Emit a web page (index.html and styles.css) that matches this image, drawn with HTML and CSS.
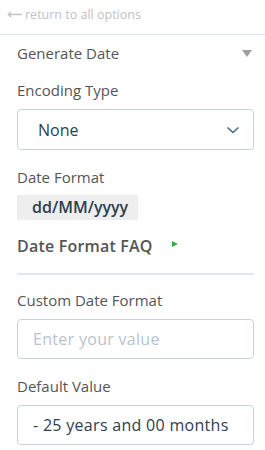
FILE: index.html
```html
<!DOCTYPE html>
<html lang="en">
<head>
    <meta charset="UTF-8">
    <meta name="viewport" content="width=device-width, initial-scale=1.0">
    <title>Generate Date</title>
    <link rel="stylesheet" href="styles.css">
</head>
<body>
    <div class="back-link">
        <svg width="15" height="7" viewBox="0 0 15 7">
            <path d="M15 3.5 H1.5 M4 1 L1.2 3.5 L4 6" fill="none" stroke="#c2c2c2" stroke-width="1.3"/>
        </svg>
        <span>return to all options</span>
    </div>

    <div class="panel">
        <div class="panel-title">
            <span>Generate Date</span>
            <span class="caret"></span>
        </div>

        <div class="field">
            <label class="field-label">Encoding Type</label>
            <div class="select-box">
                <span>None</span>
                <svg width="14" height="8" viewBox="0 0 14 8">
                    <path d="M1.5 1.5 L7 6.5 L12.5 1.5" fill="none" stroke="#4a6785" stroke-width="1.6"/>
                </svg>
            </div>
        </div>

        <div class="field">
            <label class="field-label">Date Format</label>
            <div class="format-tag">dd/MM/yyyy</div>
        </div>

        <div class="faq-row">
            <span>Date Format FAQ</span>
            <span class="play"></span>
        </div>

        <hr class="divider">

        <div class="field">
            <label class="field-label" for="customFormat">Custom Date Format</label>
            <input type="text" id="customFormat" class="text-input" placeholder="Enter your value">
        </div>

        <div class="field">
            <label class="field-label" for="defaultValue">Default Value</label>
            <input type="text" id="defaultValue" class="text-input" value="- 25 years and 00 months">
        </div>
    </div>
</body>
</html>
```

FILE: styles.css
```css
body {
    font-family: "Open Sans", Arial, sans-serif;
    margin: 0;
    background-color: #fff;
    color: #555;
}

.back-link {
    display: flex;
    align-items: center;
    gap: 3px;
    height: 28px;
    padding-left: 7px;
    padding-bottom: 6px;
    font-size: 12.5px;
    color: #c2c2c2;
    border-bottom: 1px solid #dfe5ec;
}

.panel {
    padding: 8px 11px 0 17px;
}

.panel-title {
    display: flex;
    justify-content: space-between;
    align-items: center;
    height: 20px;
    font-size: 15px;
    color: #555;
}

.caret {
    width: 0;
    height: 0;
    margin-right: 2px;
    border-left: 5px solid transparent;
    border-right: 5px solid transparent;
    border-top: 7px solid #a0a0a0;
}

.field {
    margin-top: 17px;
}

.field-label {
    display: block;
    height: 20px;
    line-height: 20px;
    margin-bottom: 9px;
    font-size: 15px;
    color: #555;
}

.select-box {
    display: flex;
    justify-content: space-between;
    align-items: center;
    height: 39px;
    padding: 0 13px 0 20px;
    border: 1px solid #c8d2dd;
    border-radius: 4px;
    font-size: 16px;
    color: #2d3e50;
}

.format-tag {
    display: inline-block;
    margin-top: -6px;
    padding: 0 10px 0 15px;
    height: 25px;
    line-height: 25px;
    background-color: #eeeeee;
    font-size: 16px;
    font-weight: 600;
    color: #2d3e50;
}

.faq-row {
    display: flex;
    align-items: center;
    gap: 19px;
    margin-top: 16px;
    height: 20px;
    font-size: 16px;
    letter-spacing: 0.2px;
    font-weight: 600;
    color: #555;
}

.play {
    width: 0;
    height: 0;
    margin-top: -4px;
    border-top: 3.5px solid transparent;
    border-bottom: 3.5px solid transparent;
    border-left: 6px solid #3da93d;
}

.divider {
    margin: 17px 0 0;
    border: none;
    height: 2px;
    background-color: #e1e7ee;
}

.divider + .field {
    margin-top: 15px;
}

.text-input {
    display: block;
    width: 100%;
    height: 40px;
    padding: 0 15px;
    border: 1px solid #c8d2dd;
    border-radius: 4px;
    box-sizing: border-box;
    font-family: inherit;
    font-size: 16px;
    letter-spacing: 0.3px;
    color: #2d3e50;
    outline: none;
}

.text-input::placeholder {
    color: #b9c3ce;
}
```
